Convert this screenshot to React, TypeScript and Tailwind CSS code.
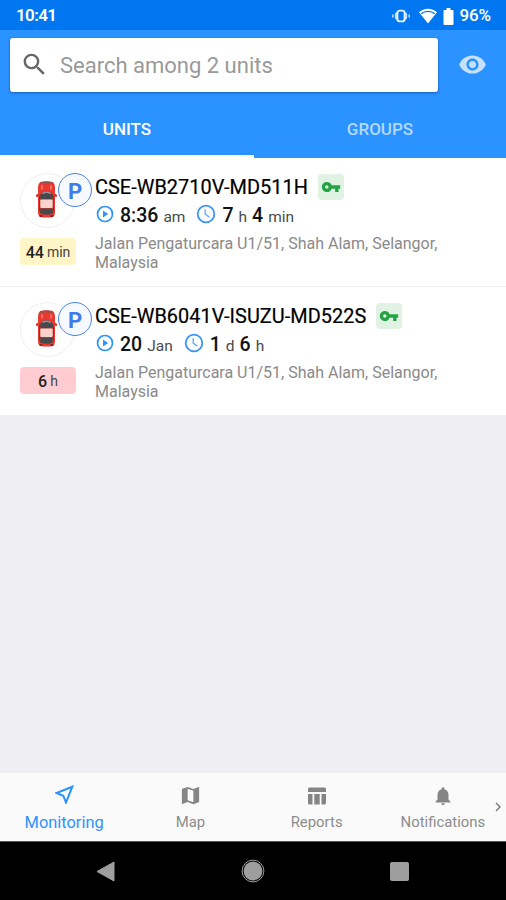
import React from "react";
import { MdMap, MdNotifications, MdSearch, MdVisibility, MdVpnKey } from "react-icons/md";

type Part = { value: string; unit: string };

type Unit = {
  name: string;
  start: Part;
  duration: Part[];
  badge: Part;
  badgeClass: string;
  address: string;
};

const units: Unit[] = [
  {
    name: "CSE-WB2710V-MD511H",
    start: { value: "8:36", unit: "am" },
    duration: [
      { value: "7", unit: "h" },
      { value: "4", unit: "min" },
    ],
    badge: { value: "44", unit: "min" },
    badgeClass: "bg-[#fff5c6]",
    address: "Jalan Pengaturcara U1/51, Shah Alam, Selangor, Malaysia",
  },
  {
    name: "CSE-WB6041V-ISUZU-MD522S",
    start: { value: "20", unit: "Jan" },
    duration: [
      { value: "1", unit: "d" },
      { value: "6", unit: "h" },
    ],
    badge: { value: "6", unit: "h" },
    badgeClass: "bg-[#ffcdd1]",
    address: "Jalan Pengaturcara U1/51, Shah Alam, Selangor, Malaysia",
  },
];

const StatusBar = () => (
  <div className="flex h-[30px] shrink-0 items-center justify-between bg-[#0077f0] pl-4 pr-[15px] pt-[2px] text-[17px] font-medium text-white">
    <span className="font-semibold tracking-[-0.6px]">10:41</span>
    <div className="flex items-center">
      {/* Vibrate */}
      <svg width="18" height="14" viewBox="0 0 18 14" className="mr-[9px]">
        <path d="M5 2.500 2.800 4.800v4.400L5 11.500ZM13 2.500l2.200 2.300v4.400L13 11.500Z" fill="#b9dbff" />
        <path d="M.8 5.500v3M17.200 5.500v3" stroke="#a9d2ff" strokeWidth="1.600" />
        <rect x="5.400" y="1.600" width="7.200" height="10.800" rx="2.400" fill="none" stroke="#e6f2ff" strokeWidth="1.900" />
      </svg>
      {/* Wifi */}
      <svg width="18" height="16" viewBox="0 0 18 16" className="mr-[6px]">
        <path d="M9 15.500 0 4.300C5-.6 13-.6 18 4.300Z" fill="#fff" />
        <path d="M2.200 5.800c4-3.200 9.600-3.200 13.600 0" fill="none" stroke="#0077f0" strokeWidth="1.300" />
      </svg>
      {/* Battery */}
      <svg width="11" height="17" viewBox="0 0 10 17" className="mr-[5px]">
        <path d="M3 0h4v2h2a1 1 0 0 1 1 1v13a1 1 0 0 1-1 1H1a1 1 0 0 1-1-1V3a1 1 0 0 1 1-1h2Z" fill="#fff" />
      </svg>
      <span className="tracking-[-0.1px]">96%</span>
    </div>
  </div>
);

const Header = () => (
  <header className="flex h-[128px] shrink-0 flex-col bg-[#2b93ff]">
    <div className="flex items-center pl-[10px] pt-[7.500px]">
      <div className="flex h-[54px] w-[428px] items-center rounded-[3px] bg-white pl-[10px] shadow-[0_1px_3px_rgba(0,60,140,0.6)]">
        <MdSearch size={29} color="#666" />
        <span className="ml-[11px] pt-[2px] text-[22px] text-[#999]">Search among 2 units</span>
      </div>
      <div className="flex grow justify-center">
        <MdVisibility size={29} color="#c6e1ff" />
      </div>
    </div>
    <div className="mt-auto flex h-[60px] text-[17px] font-medium">
      <div className="flex w-[254px] items-center justify-center border-b-[3px] border-white pt-[7px] text-white">
        UNITS
      </div>
      <div className="flex grow items-center justify-center pt-[4px] text-[#b4d8ff]">GROUPS</div>
    </div>
  </header>
);

const Car = () => (
  <svg width="21" height="37" viewBox="0 0 21 35" preserveAspectRatio="none">
    <path d="M0 13.200 3 11.300h15l3 1.900v1.600H0Z" fill="#d5261f" />
    <path d="M4.200 1Q10.500-.6 16.800 1 19 2.500 19 6v24q0 3-2.200 4-6.300 1.200-12.600 0Q2 33 2 30V6Q2 2.500 4.200 1Z" fill="#e8382f" />
    <path d="M4.500 1.300q6-1.600 12 0v1.500q-6-1.400-12 0Z" fill="#8c5750" />
    <path d="M6 4v4M15 4v4" stroke="#f78073" strokeWidth="1.500" />
    <path d="M3.800 13.500Q10.500 6 17.200 13.500L16 17.500H5Z" fill="#48494d" />
    <path d="M6.500 12q4-2.600 8 0" fill="none" stroke="#96969b" strokeWidth="1.300" />
    <path d="M3.800 14.500v14M17.200 14.500v14" stroke="#5e3a3e" strokeWidth="1.200" />
    <rect x="4.300" y="17.500" width="12.400" height="8" rx="1" fill="#fcd3cb" />
    <path d="M4.600 26h11.800l.6 4.500q-6.500 3-13 0Z" fill="#48494d" />
    <path d="M3.500 33h3M14.500 33h3" stroke="#8e1512" strokeWidth="1.400" />
  </svg>
);

const PlayIcon = () => (
  <svg width="18" height="18" viewBox="0 0 18 18">
    <circle cx="9" cy="9" r="7.500" fill="none" stroke="#2b93ff" strokeWidth="1.700" />
    <path d="M7 5.600v6.800L12.200 9Z" fill="#2b93ff" />
  </svg>
);

const ClockIcon = () => (
  <svg width="20" height="20" viewBox="0 0 20 20">
    <circle cx="10" cy="10" r="8.300" fill="none" stroke="#3a94f8" strokeWidth="1.800" />
    <path d="M9.200 5.200v5l4.200 3" fill="none" stroke="#6eb0f8" strokeWidth="1.500" />
  </svg>
);

const Amount = ({ value, unit }: Part) => (
  <span className="whitespace-nowrap">
    <span className="text-[19.500px] font-medium text-[#111]">{value}</span>
    <span className="ml-[5px] text-[15.500px] text-[#4a4a4a]">{unit}</span>
  </span>
);

const UnitRow = ({ unit }: { unit: Unit }) => (
  <div className="flex h-[129px] shrink-0 border-b border-[#f0f0f2] bg-white pl-5">
    <div className="w-[75px] shrink-0 pt-[15px]">
      <div className="relative flex h-[55px] w-[55px] items-center justify-center rounded-full border border-[#efefef] pb-[2px] pr-[2px]">
        <Car />
        <div className="absolute -top-px left-[37px] flex h-[34px] w-[34px] items-center justify-center rounded-full border-[1.5px] border-[#4a83ea] bg-[#f6f9ff] pt-[2px] text-[22px] font-bold text-[#3f7bea]">
          P
        </div>
      </div>
      <div className={`mt-[10px] flex h-[27px] w-14 items-center justify-center rounded-[4px] pt-[2px] ${unit.badgeClass}`}>
        <span className="text-[16px] font-medium text-[#222]">{unit.badge.value}</span>
        <span className="ml-[3px] text-[14px] text-[#444]">{unit.badge.unit}</span>
      </div>
    </div>
    <div className="pt-[15px]">
      <div className="flex h-7 items-center">
        <span className="whitespace-nowrap pt-[2px] text-[19.900px] tracking-[0.04px] text-black [-webkit-text-stroke:0.2px_#000]">{unit.name}</span>
        <span className="ml-[10px] flex h-[26px] w-[26px] items-center justify-center rounded-[4px] bg-[#dff2e3]">
          <MdVpnKey size={20} color="#25a244" className="-mt-px" />
        </span>
      </div>
      <div className="flex h-7 items-center pt-px">
        <span className="mr-[6px] -mt-[3px] ml-px"><PlayIcon /></span>
        <Amount value={unit.start.value} unit={unit.start.unit} />
        <span className="ml-[11px] mr-[6px] -mt-[3px]"><ClockIcon /></span>
        <span className="flex gap-[5px]">
          {unit.duration.map((part) => (
            <Amount key={part.unit} value={part.value} unit={part.unit} />
          ))}
        </span>
      </div>
      <p className="mt-[6px] w-[360px] text-[16px] leading-[18.500px] text-[#8a8a8a]">{unit.address}</p>
    </div>
  </div>
);

const ReportsIcon = () => (
  <svg width="18" height="18" viewBox="0 0 18 18" fill="#858585">
    <path d="M1.500.500h15a1.500 1.500 0 0 1 1.500 1.500v3H0V2A1.500 1.500 0 0 1 1.500.500ZM0 7h4.500v10.500h-3A1.500 1.500 0 0 1 0 16ZM6.300 7h5.400v10.500H6.300ZM13.500 7H18v9a1.500 1.500 0 0 1-1.500 1.500h-3Z" />
  </svg>
);

const MonitoringIcon = () => (
  <svg width="19" height="19" viewBox="0 0 19 19">
    <path d="M17.300 1.700 1.500 8l6.800 2.700L11 17.500Z" fill="none" stroke="#2b93ff" strokeWidth="2" />
  </svg>
);

const BottomNav = () => (
  <nav className="relative grid h-[68px] shrink-0 grid-cols-4 bg-[#fafafa] pl-px text-[14.900px] text-[#8c8c8c]">
    <div className="flex flex-col items-center pt-[12px] text-[#2b93ff]">
      <div className="flex h-[22px] items-start"><MonitoringIcon /></div>
      <span className="mt-[3px] text-[16.400px] leading-[26px]">Monitoring</span>
    </div>
    <div className="flex flex-col items-center pt-[11px]">
      <div className="flex h-[23px] items-center"><MdMap size={23} color="#858585" /></div>
      <span className="mt-[2px] leading-[26px]">Map</span>
    </div>
    <div className="flex flex-col items-center pt-[11px]">
      <div className="flex h-[23px] items-center"><ReportsIcon /></div>
      <span className="mt-[2px] leading-[26px]">Reports</span>
    </div>
    <div className="flex flex-col items-center pt-[11px]">
      <div className="flex h-[23px] items-center"><MdNotifications size={22} color="#858585" /></div>
      <span className="mt-[2px] leading-[26px]">Notifications</span>
    </div>
    <svg width="6" height="10" viewBox="0 0 6 10" className="absolute right-[5px] top-[29px]">
      <path d="m1 1 4 4-4 4" fill="none" stroke="#777" strokeWidth="1.400" />
    </svg>
  </nav>
);

const SystemBar = () => (
  <div className="flex h-[59px] shrink-0 items-center justify-between border-t border-[#555] bg-black pl-[96px] pr-[97px]">
    <svg width="19" height="21" viewBox="0 0 19 21">
      <path d="M18 1v19L1 10.500Z" fill="#9e9e9e" stroke="#9e9e9e" strokeLinejoin="round" />
    </svg>
    <svg width="24" height="24" viewBox="0 0 24 24">
      <circle cx="12" cy="12" r="9.400" fill="#9e9e9e" />
      <circle cx="12" cy="12" r="10.900" fill="none" stroke="#9e9e9e" strokeWidth="1" />
    </svg>
    <div className="h-[19px] w-[19px] rounded-[2px] bg-[#9e9e9e]" />
  </div>
);

const App = () => (
  <div className="flex h-[900px] w-[506px] flex-col overflow-hidden bg-[#eeeef3] font-['Roboto',sans-serif]">
    <StatusBar />
    <Header />
    <main className="flex grow flex-col">
      {units.map((unit) => (
        <UnitRow key={unit.name} unit={unit} />
      ))}
    </main>
    <BottomNav />
    <SystemBar />
  </div>
);

export default App;
